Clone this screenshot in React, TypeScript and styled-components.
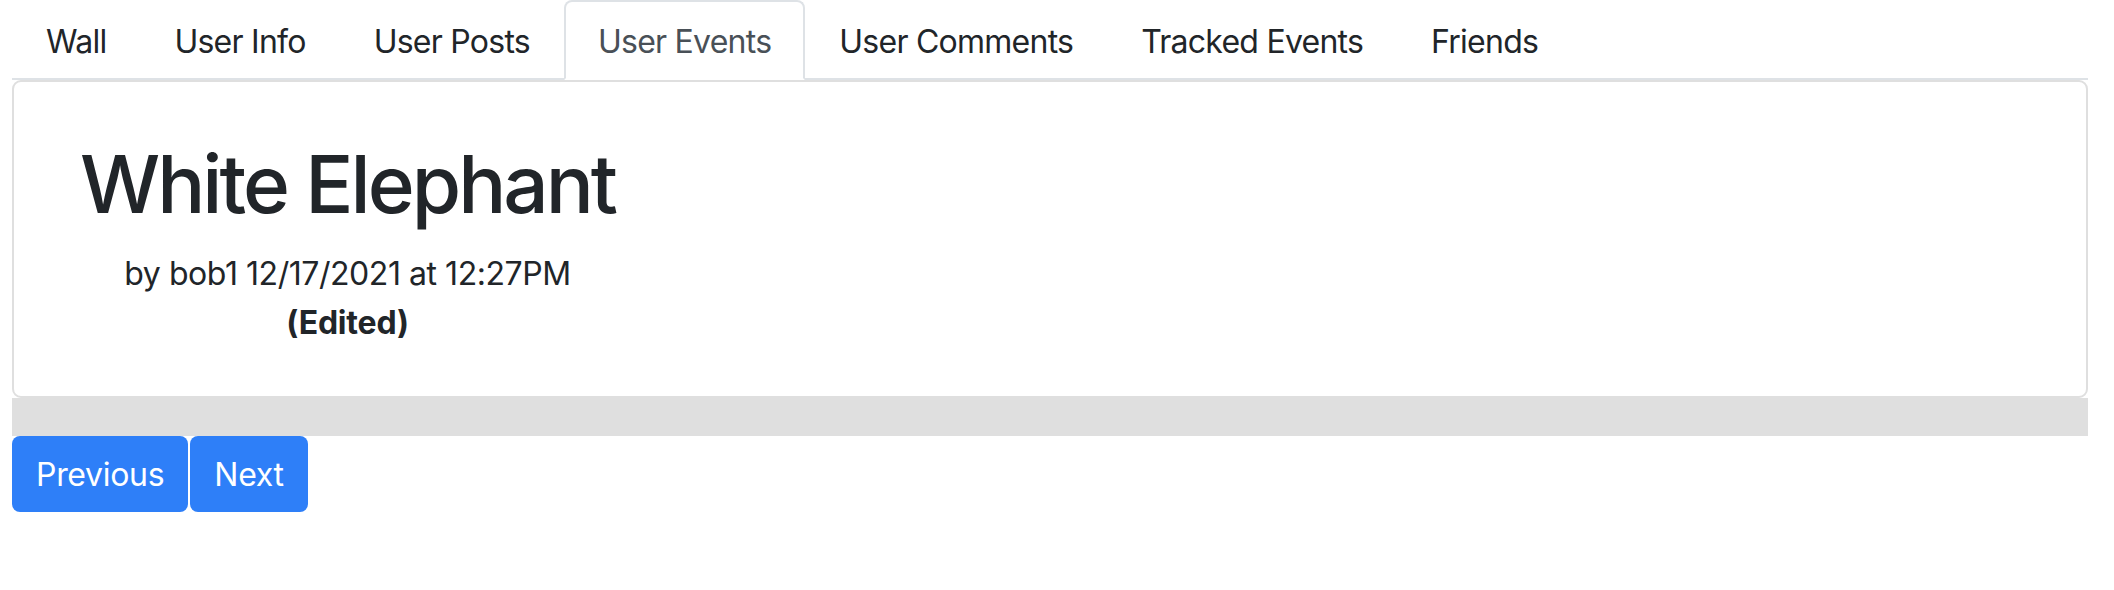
import React from "react";
import styled, { createGlobalStyle } from "styled-components";

const GlobalStyle = createGlobalStyle`
  html, body {
    margin: 0;
    padding: 0;
    background: #ffffff;
  }
  body {
    font-family: Inter, "Noto Sans", "Liberation Sans", sans-serif;
    color: #212529;
    -webkit-font-smoothing: antialiased;
  }
`;

const Page = styled.div`
  width: 2076px;
  margin-left: 12px;
  display: flex;
  flex-direction: column;
`;

const TabBar = styled.ul`
  list-style: none;
  margin: 0;
  padding: 0;
  display: flex;
  height: 80px;
  box-sizing: border-box;
  border-bottom: 2px solid #dee2e6;
`;

const Tab = styled.li<{ $active?: boolean }>`
  box-sizing: border-box;
  height: 80px;
  margin-bottom: -2px;
  padding: 3px 32px 0;
  display: flex;
  align-items: center;
  font-size: 32px;
  line-height: 48px;
  letter-spacing: -0.75px;
  color: ${(p) => (p.$active ? "#495057" : "#212529")};
  background: ${(p) => (p.$active ? "#ffffff" : "transparent")};
  border: 2px solid ${(p) => (p.$active ? "#dee2e6" : "transparent")};
  border-bottom-color: ${(p) => (p.$active ? "#ffffff" : "transparent")};
  border-radius: 8px 8px 0 0;
  white-space: nowrap;
`;

const Card = styled.div`
  box-sizing: border-box;
  height: 318px;
  border: 2px solid #dfdfdf;
  border-radius: 9px;
  background: #ffffff;
  padding: 54px 0 0 66px;
  display: flex;
  align-items: flex-start;
`;

const Info = styled.div`
  display: flex;
  flex-direction: column;
  align-items: center;
`;

const Title = styled.h1`
  margin: 0 0 18px;
  font-size: 80px;
  line-height: 96px;
  font-weight: 500;
  color: #212529;
  letter-spacing: -3px;
`;

const Byline = styled.div`
  font-size: 32px;
  line-height: 48px;
  letter-spacing: -0.45px;
  color: #212529;
`;

const Edited = styled.b`
  margin-top: 1px;
  font-size: 32px;
  line-height: 48px;
  font-weight: 700;
  letter-spacing: -0.2px;
  color: #212529;
`;

const GrayBar = styled.div`
  height: 38px;
  background: #dfdfdf;
`;

const Pager = styled.div`
  display: flex;
  gap: 2px;
`;

const PageButton = styled.button`
  box-sizing: border-box;
  height: 76px;
  padding: 2px 24px 0;
  border: none;
  border-radius: 8px;
  background: #2e7ff8;
  color: #ffffff;
  font-family: inherit;
  font-size: 32px;
  line-height: 48px;
  letter-spacing: -0.3px;
  cursor: pointer;
`;

const tabs = [
  "Wall",
  "User Info",
  "User Posts",
  "User Events",
  "User Comments",
  "Tracked Events",
  "Friends",
];

export default function App() {
  return (
    <>
      <GlobalStyle />
      <Page>
        <TabBar>
          {tabs.map((t) => (
            <Tab key={t} $active={t === "User Events"}>
              {t}
            </Tab>
          ))}
        </TabBar>
        <Card>
          <Info>
            <Title>White Elephant</Title>
            <Byline>by bob1 12/17/2021 at 12:27PM</Byline>
            <Edited>(Edited)</Edited>
          </Info>
        </Card>
        <GrayBar />
        <Pager>
          <PageButton>Previous</PageButton>
          <PageButton>Next</PageButton>
        </Pager>
      </Page>
    </>
  );
}
